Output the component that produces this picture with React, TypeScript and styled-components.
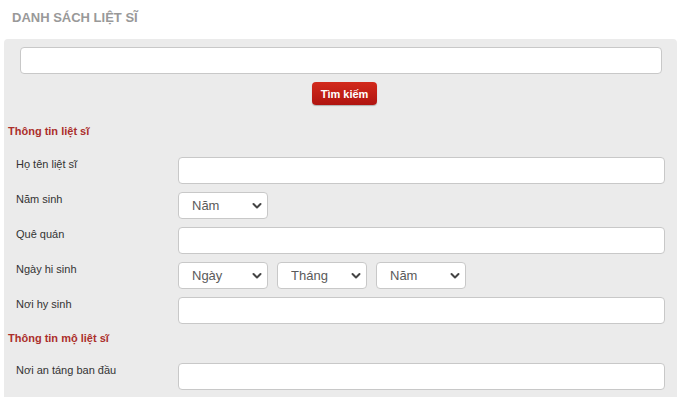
import styled, { createGlobalStyle } from "styled-components";

const GlobalStyle = createGlobalStyle`
  html, body {
    margin: 0;
    padding: 0;
    background: #ffffff;
    font-family: "Liberation Sans", Arial, sans-serif;
  }
  * { box-sizing: border-box; }
`;

type Field = {
  label: string
  kind: "text" | "selects"
  options?: string[]
}

const martyrFields: Field[] = [
  { label: "Họ tên liệt sĩ", kind: "text" },
  { label: "Năm sinh", kind: "selects", options: ["Năm"] },
  { label: "Quê quán", kind: "text" },
  { label: "Ngày hi sinh", kind: "selects", options: ["Ngày", "Tháng", "Năm"] },
  { label: "Nơi hy sinh", kind: "text" },
];

const graveFields: Field[] = [
  { label: "Nơi an táng ban đầu", kind: "text" },
];

const Chevron = () => (
  <ChevronIcon viewBox="0 0 10 10" width="10" height="10">
    <path d="M1.5 3 L5 6.5 L8.5 3" fill="none" stroke="#444" strokeWidth="2" strokeLinecap="round" strokeLinejoin="round" />
  </ChevronIcon>
);

const SelectBox = ({ value }: { value: string }) => (
  <SelectWrap>
    <Select defaultValue={value}>
      <option>{value}</option>
    </Select>
    <Chevron />
  </SelectWrap>
);

const FieldRow = ({ field }: { field: Field }) => (
  <Row>
    <Label>{field.label}</Label>
    {field.kind === "text" ? (
      <TextInput type="text" />
    ) : (
      <SelectGroup>
        {field.options?.map((o, i) => <SelectBox key={i} value={o} />)}
      </SelectGroup>
    )}
  </Row>
);

const App = () => (
  <>
    <GlobalStyle />
    <Page>
      <Title>DANH SÁCH LIỆT SĨ</Title>
      <Panel>
        <SearchInput type="text" />
        <ButtonBar>
          <SearchButton>Tìm kiếm</SearchButton>
        </ButtonBar>

        <SectionTitle>Thông tin liệt sĩ</SectionTitle>
        <Rows>
          {martyrFields.map((f) => <FieldRow key={f.label} field={f} />)}
        </Rows>

        <SectionTitle $tight>Thông tin mộ liệt sĩ</SectionTitle>
        <Rows>
          {graveFields.map((f) => <FieldRow key={f.label} field={f} />)}
        </Rows>
      </Panel>
    </Page>
  </>
);

const Page = styled.div`
  width: 681px;
  height: 397px;
  overflow: hidden;
  padding: 0 4px;
`;

const Title = styled.h1`
  margin: 0;
  padding: 10px 0 0 8px;
  height: 39px;
  font-size: 13px;
  font-weight: bold;
  color: #999999;
  letter-spacing: 0px;
`;

const Panel = styled.div`
  background: #ebebeb;
  border-radius: 4px 4px 0 0;
  padding: 8px 12px 20px 4px;
  width: 673px;
`;

const SearchInput = styled.input`
  display: block;
  width: 642px;
  height: 27px;
  margin-left: 12px;
  border: 1px solid #c8c8c8;
  border-radius: 4px;
  background: #ffffff;
  outline: none;
`;

const ButtonBar = styled.div`
  display: flex;
  padding-left: 304px;
  margin-top: 8px;
`;

const SearchButton = styled.button`
  width: 65px;
  height: 23px;
  border: none;
  border-radius: 4px;
  background: linear-gradient(#d22a1c, #b01410);
  color: #ffffff;
  font-family: "Liberation Sans", Arial, sans-serif;
  font-size: 11px;
  font-weight: bold;
  box-shadow: 0 1px 1px rgba(0, 0, 0, 0.25);
  cursor: pointer;
`;

const SectionTitle = styled.h3<{ $tight?: boolean }>`
  margin: ${({ $tight }) => ($tight ? "0" : "20px")} 0 0 0;
  padding-left: 0;
  height: ${({ $tight }) => ($tight ? "31px" : "32px")};
  font-size: 11px;
  font-weight: bold;
  color: #ab2f2b;
`;

const Rows = styled.div`
  display: flex;
  flex-direction: column;
  gap: 8px;
  margin-bottom: 8px;
`;

const Row = styled.div`
  display: flex;
  align-items: flex-start;
`;

const Label = styled.div`
  width: 170px;
  padding: 1px 0 0 8px;
  font-size: 11px;
  color: #333333;
`;

const TextInput = styled.input`
  width: 487px;
  height: 27px;
  border: 1px solid #c8c8c8;
  border-radius: 4px;
  background: #ffffff;
  outline: none;
`;

const SelectGroup = styled.div`
  display: flex;
  gap: 9px;
`;

const SelectWrap = styled.div`
  position: relative;
  width: 90px;
  height: 27px;
`;

const Select = styled.select`
  appearance: none;
  width: 100%;
  height: 100%;
  padding: 0 0 0 13px;
  border: 1px solid #c8c8c8;
  border-radius: 4px;
  background: #ffffff;
  font-family: "Liberation Sans", Arial, sans-serif;
  font-size: 13px;
  color: #5a5a5a;
  outline: none;
`;

const ChevronIcon = styled.svg`
  position: absolute;
  right: 6px;
  top: 9px;
  pointer-events: none;
`;

export default App;
